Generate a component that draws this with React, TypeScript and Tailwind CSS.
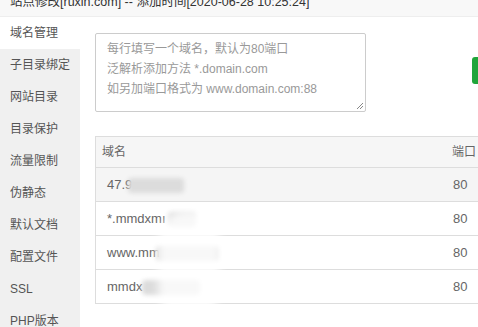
const menu = ['域名管理', '子目录绑定', '网站目录', '目录保护', '流量限制', '伪静态', '默认文档', '配置文件', 'SSL', 'PHP版本']

const domains = [
  { name: '47.9', blur: 'left-[32px] w-[56px]' },
  { name: '*.mmdxmı', blur: 'left-[72px] w-[28px]' },
  { name: 'www.mm', blur: 'left-[60px] w-[62px]' },
  { name: 'mmdx', blur: 'left-[46px] w-[58px]' },
]

export default function App() {
  return (
    <div className="relative w-[478px] h-[327px] overflow-hidden bg-white text-[12px] font-['Liberation_Sans','Noto_Sans_CJK_SC',sans-serif]">
      <div className="h-4 overflow-hidden bg-[#f8f8f8] border-b border-[#eeeeee] box-content">
        <div className="-mt-[11px] pl-[10px] leading-[27px] text-[12.5px] text-[#333] whitespace-nowrap">
          站点修改[ruxin.com] -- 添加时间[2020-06-28 10:25:24]
        </div>
      </div>

      <div className="flex h-[310px]">
        <div className="w-20 shrink-0 bg-[#f0f0f0]">
          {menu.map((item, i) => (
            <p
              key={item}
              className={`h-8 leading-8 pl-[10px] text-[#555] ${i === 0 ? 'bg-white' : ''}`}
            >
              {item}
            </p>
          ))}
        </div>

        <div className="flex-1 pl-[15px] pt-4">
          <div className="flex items-start">
            <div className="relative w-[271px] h-[79px] shrink-0 rounded-[2px] border border-[#cccccc] px-[11px] pt-[5px] leading-5 text-[#999]">
              <p>每行填写一个域名，默认为80端口</p>
              <p>泛解析添加方法 *.domain.com</p>
              <p>如另加端口格式为 www.domain.com:88</p>
              <svg className="absolute right-[1px] bottom-[1px]" width="8" height="8" viewBox="0 0 8 8">
                <path d="M7 1L1 7M7 4L4 7" stroke="#888" strokeWidth="1" />
              </svg>
            </div>
            <div className="ml-[106px] mt-6 h-[27px] w-[50px] shrink-0 rounded-[3px] bg-[#20a53a]" />
          </div>

          <div className="mt-6 w-[420px] border border-[#dddddd] text-[#666]">
            <div className="flex h-[30px] items-center bg-[#f6f6f6] pl-[6px]">
              <span className="w-[350px] shrink-0">域名</span>
              <span>端口</span>
            </div>
            {domains.map((d, i) => (
              <div
                key={d.name}
                className={`relative flex h-[34px] items-center border-t border-[#dddddd] pl-[11px] ${i === 0 ? 'bg-[#f5f5f5]' : ''}`}
              >
                <span className="w-[346px] shrink-0 text-[13px]">{d.name}</span>
                <span className="text-[13px]">80</span>
                <div className={`absolute top-[10px] h-[15px] rounded-[4px] bg-[#dcdcdc] blur-[2px] ${d.blur}`} />
              </div>
            ))}
          </div>
        </div>
      </div>

      <div className="absolute left-[158px] top-[210px] h-[110px] w-[62px] rounded-[30px] bg-white/80 blur-[4px]" />
    </div>
  )
}
